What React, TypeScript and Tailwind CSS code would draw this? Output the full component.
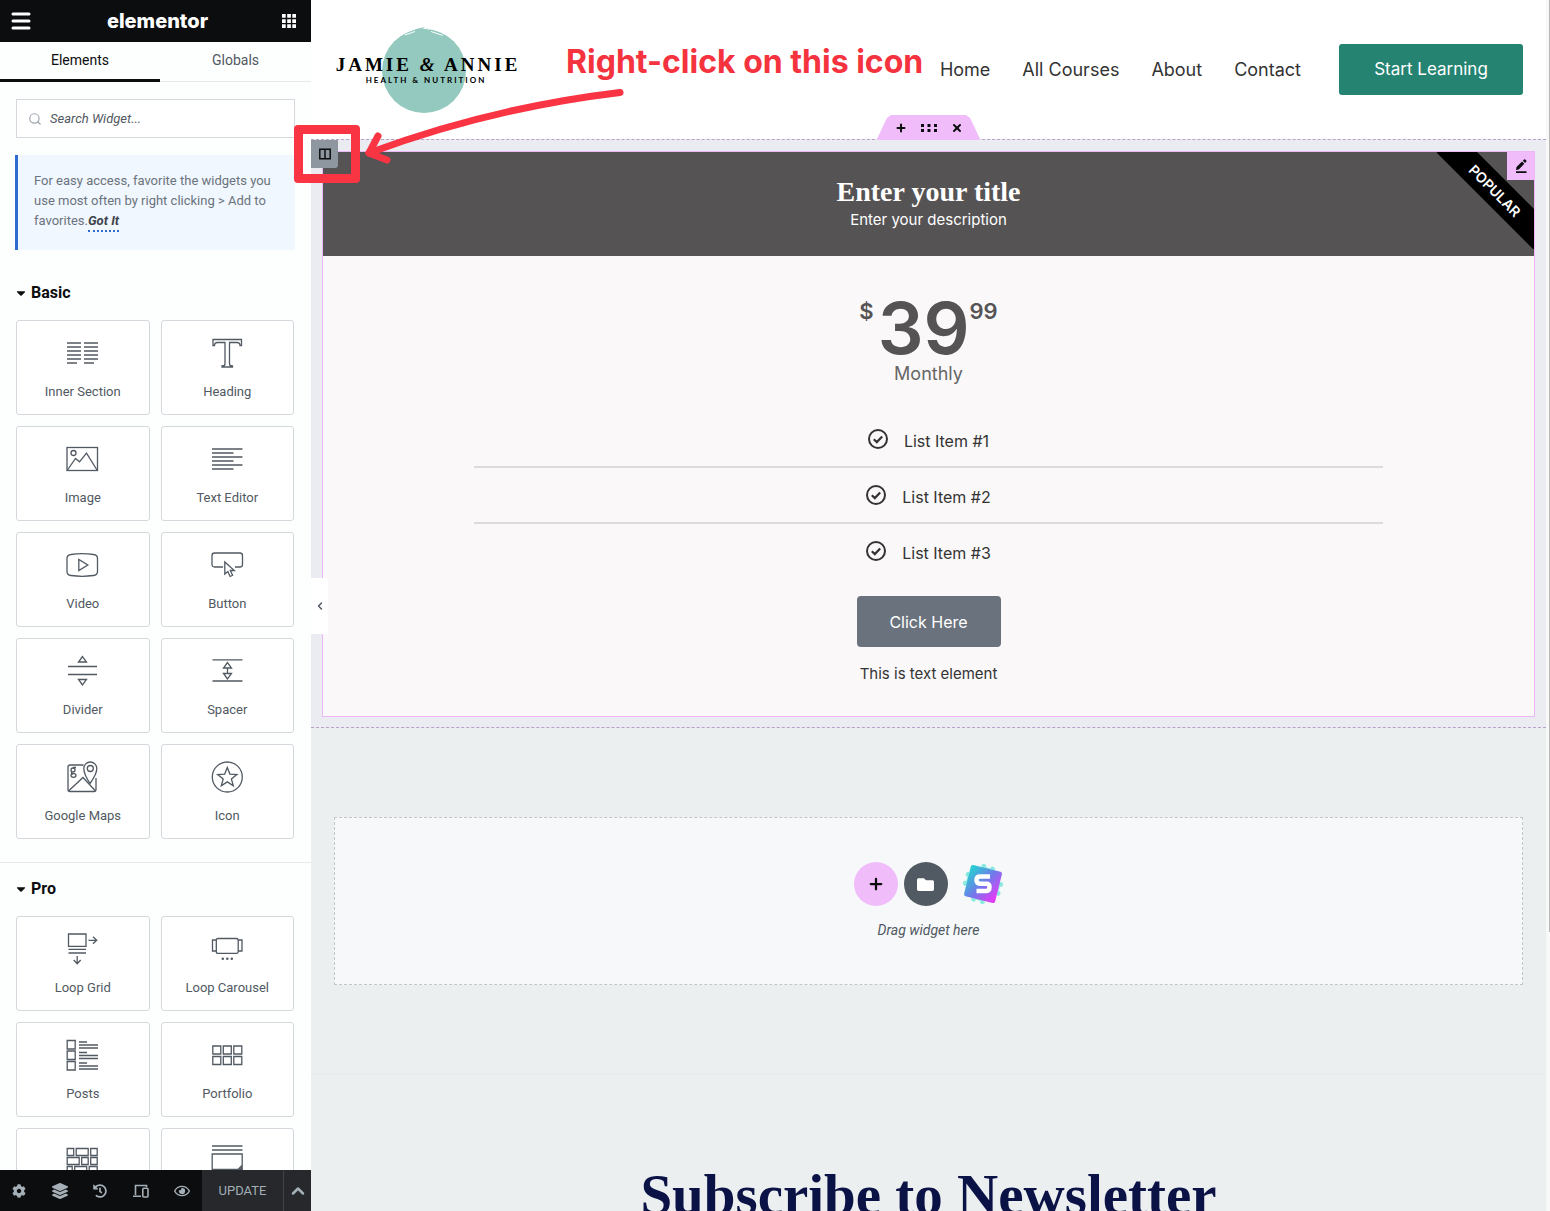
import type { ReactNode } from 'react';
import { FaCog, FaLayerGroup, FaHistory, FaRegEye, FaFolder, FaCaretDown } from 'react-icons/fa';
import { ChevronLeft, ChevronUp, Menu, Plus, Search, X } from 'lucide-react';

interface Widget {
    name?: string;
    icon: ReactNode;
}

const basicWidgets: Widget[] = [
    {
        name: 'Inner Section',
        icon: (
            <path d="M1 6h14M1 10h14M1 14h14M1 18h14M1 22h14M1 26h10M18 6h14M18 10h14M18 14h14M18 18h14M18 22h14M18 26h10" />
        ),
    },
    {
        name: 'Heading',
        icon: (
            <path d="M2 2.5h28.500v6h-1.500q0-3-3-3h-7.500v21.500q0 2 3 2v1h-10.500v-1q3 0 3-2V5.500H6.500q-3 0-3 3H2z" />
        ),
    },
    {
        name: 'Image',
        icon: (
            <>
                <rect x="1" y="4.500" width="30.500" height="23" />
                <circle cx="7.500" cy="10" r="2.500" />
                <path d="M1.500 27 9.500 15.500l4 3.300 7-8.600L31 27" />
            </>
        ),
    },
    {
        name: 'Text Editor',
        icon: <path d="M1 6h30.500M1 10h21.500M1 14h30.500M1 18h21.500M1 22h30.500M1 26h21.500" />,
    },
    {
        name: 'Video',
        icon: (
            <>
                <path d="M5 5.500q11-1.800 22.500 0q4 .5 4 4v13q0 3.500-4 4q-11.500 1.600-22.500 0q-4-.5-4-4v-13q0-3.500 4-4z" />
                <path d="M12.800 10.500v11l9-5.500z" />
            </>
        ),
    },
    {
        name: 'Button',
        icon: (
            <>
                <path d="M12 18H3.500q-2.500 0-2.500-2.500v-9Q1 4 3.500 4H29q2.500 0 2.500 2.500v9Q31.500 18 29 18h-5" />
                <path d="M13.800 13v12l3-2.500 2.300 5 2.500-1.200-2.300-4.800h4z" />
            </>
        ),
    },
    {
        name: 'Divider',
        icon: <path d="M2 11.500h29M2 19.500h29M16.500 1.500l-4 5.500h8zM16.500 30l-4-5.500h8z" />,
    },
    {
        name: 'Spacer',
        icon: <path d="M1.500 4.800h30M1.500 26h30M16.500 7.500l-4 5.500h8zM16.500 24l-4-5.500h8zM16.500 13v5.500" />,
    },
    {
        name: 'Google Maps',
        icon: (
            <>
                <path d="M17.500 4H4Q2 4 2 6v22.500q0 2 2 2h24q2 0 2-2V17" />
                <path d="M24 22.500Q17.800 13 17.800 7.500a6.500 6.500 0 0 1 13 0Q30.800 13 24 22.500z" />
                <circle cx="24.300" cy="7.500" r="3" />
                <path d="M2.500 30 17 16.500l12.500 13.500" />
                <circle cx="7" cy="9" r="2" />
                <path d="M10 6.500H7M6 11q-1.500 1.500 1 2" />
                <ellipse cx="7.500" cy="14.500" rx="2.500" ry="1.800" />
            </>
        ),
    },
    {
        name: 'Icon',
        icon: (
            <>
                <circle cx="16.300" cy="16" r="15" />
                <path d="M16.300 6.500l2.600 6.600 7 .4-5.500 4.400 1.900 6.900-6-3.900-6 3.900 1.900-6.900-5.500-4.400 7-.4z" />
            </>
        ),
    },
];

const proWidgets: Widget[] = [
    {
        name: 'Loop Grid',
        icon: (
            <path d="M2.500 1h17.500v12.300H2.500zM2.500 16.300h17.500M2.500 20h17.500M22.500 7.300h8M27 3.800l3.700 3.500-3.700 3.500M11.200 23v7.500M7.700 27l3.500 3.700 3.500-3.700" />
        ),
    },
    {
        name: 'Loop Carousel',
        icon: (
            <>
                <path d="M7 5.500h18.500q1.700 0 1.700 1.700v11.500q0 1.700-1.700 1.700H7q-1.700 0-1.700-1.700V7.200q0-1.700 1.700-1.700zM5.300 7H1.500v11h3.800M27.200 7H31v11h-3.800" />
                <path strokeWidth="2.500" strokeLinecap="round" d="M11.800 25.700h.01M16.300 25.700h.01M20.800 25.700h.01" />
            </>
        ),
    },
    {
        name: 'Posts',
        icon: (
            <path d="M1.200 1.500h8v8.500h-8zM1.200 12h8v8.500h-8zM1.200 22.500h8V31h-8zM13 3h8M13 6h19M13 9h19M13 13.500h8M13 16.500h19M13 19.500h19M13 24h8M13 27h19M13 30h19" />
        ),
    },
    {
        name: 'Portfolio',
        icon: (
            <path d="M1.800 7h8v8h-8zM12.300 7h8v8h-8zM22.800 7h8v8h-8zM1.800 17.500h8v8h-8zM12.300 17.500h8v8h-8zM22.800 17.500h8v8h-8z" />
        ),
    },
    {
        icon: (
            <path d="M1.200 3.500h6.500v7H1.200zM10.200 3.500h12v7h-12zM24.700 3.500h6.500v7h-6.500zM1.200 12.500h12v7h-12zM15.700 12.500h6.500v7h-6.500zM24.700 12.500h6.500v7h-6.500zM1.200 21.500h5v7h-5zM8.700 21.500h12v7h-12zM23.200 21.500h8v7h-8z" />
        ),
    },
    {
        icon: <path d="M1 1h30.500M1 5h30.500M1.200 9h30v15.500h-30zM31 20.500l-4 4M31 22.500l-2 2" />,
    },
];

const navLinks = ['Home', 'All Courses', 'About', 'Contact'];
const listItems = ['List Item #1', 'List Item #2', 'List Item #3'];

function WidgetGrid({ widgets }: { widgets: Widget[] }) {
    return (
        <div className="grid grid-cols-2 gap-[11px] pr-[17px] pl-4">
            {widgets.map((widget, idx) => (
                <button
                    key={idx}
                    className="flex h-[95px] flex-col items-center rounded-[3px] border border-[#d5d8dc] bg-white pt-4 text-[#515962]"
                >
                    <svg
                        viewBox="0 0 33 32"
                        className="h-8 w-[33px] shrink-0"
                        fill="none"
                        stroke="currentColor"
                        strokeWidth="1.300"
                    >
                        {widget.icon}
                    </svg>
                    {widget.name && <span className="mt-[15px] text-[13px] leading-4">{widget.name}</span>}
                </button>
            ))}
        </div>
    );
}

function CategoryTitle({ title }: { title: string }) {
    return (
        <h2 className="flex items-center gap-1 pl-[15px] text-[16px] leading-5 font-bold text-[#0c0d0e]">
            <FaCaretDown className="h-[14px] w-3" />
            {title}
        </h2>
    );
}

// Panel izquierdo del editor
function Sidebar() {
    return (
        <aside className="flex w-[311px] shrink-0 flex-col bg-[#fdfefe] font-[Roboto,sans-serif]">
            <div className="flex h-[42px] shrink-0 items-center justify-between bg-[#0c0d0e] pr-3 pl-[9px] text-white">
                <button aria-label="Menu">
                    <Menu className="h-6 w-6" strokeWidth={3} />
                </button>
                <span className="font-[Inter,sans-serif] text-[20px] leading-5 font-extrabold">elementor</span>
                <button aria-label="Apps" className="pr-[3px]">
                    <svg viewBox="0 0 14 14" className="h-[14px] w-[14px]" fill="currentColor">
                        <path d="M0 0h3.700v3.700H0zM5.200 0h3.700v3.700H5.200zM10.300 0H14v3.700h-3.700zM0 5.200h3.700v3.700H0zM5.200 5.200h3.700v3.700H5.200zM10.300 5.200H14v3.700h-3.700zM0 10.300h3.700V14H0zM5.200 10.300h3.700V14H5.200zM10.300 10.300H14V14h-3.700z" />
                    </svg>
                </button>
            </div>

            <div className="flex h-10 shrink-0 text-[14px]">
                <button className="w-40 border-b-3 border-[#0c0d0e] text-[#0c0d0e]">Elements</button>
                <button className="flex-1 border-b border-[#e6e9ec] pb-[2px] text-[#515962]">Globals</button>
            </div>

            <div className="min-h-0 flex-1 overflow-hidden">
                <label className="mx-4 mt-[17px] flex h-[39px] items-center gap-2 border border-[#d5d8dc] bg-white px-[11px]">
                    <Search className="h-[14px] w-[14px] text-[#9da5ae]" strokeWidth={2} />
                    <input
                        aria-label="Search Widget"
                        placeholder="Search Widget..."
                        className="min-w-0 flex-1 text-[13px] italic outline-none placeholder:text-[#515962]"
                    />
                </label>

                {/* Aviso de favoritos */}
                <p className="mt-[17px] mr-4 ml-[15px] h-[95px] border-l-3 border-[#2f6bd0] bg-[#f0f7ff] py-4 pr-3 pl-4 text-[13px] leading-5 text-[#6b737c]">
                    For easy access, favorite the widgets you use most often by right clicking &gt; Add to favorites.
                    <a
                        href="#got-it"
                        className="border-b-2 border-dotted border-[#2f6bd0] pb-[2px] font-bold text-[#3f444b] italic"
                    >
                        Got It
                    </a>
                </p>

                <div className="mt-[33px] mb-[17px]">
                    <CategoryTitle title="Basic" />
                </div>
                <WidgetGrid widgets={basicWidgets} />

                <div className="mt-[23px] mb-[17px] border-t border-[#e6e9ec] pt-4">
                    <CategoryTitle title="Pro" />
                </div>
                <WidgetGrid widgets={proWidgets} />
            </div>

            <div className="flex h-[41px] shrink-0 bg-[#0c0d0e] text-[#a4afb7]">
                <div className="flex flex-1 items-center justify-between px-3">
                    <button aria-label="Settings">
                        <FaCog className="h-[14px] w-[14px]" />
                    </button>
                    <button aria-label="Navigator">
                        <FaLayerGroup className="h-4 w-4" />
                    </button>
                    <button aria-label="History">
                        <FaHistory className="h-[14px] w-[14px]" />
                    </button>
                    <button aria-label="Responsive mode">
                        <svg viewBox="0 0 16 14" className="h-[14px] w-4" fill="none" stroke="currentColor" strokeWidth="1.600">
                            <path d="M13.500 3V1.500H2.500V11M0 12.200h8" />
                            <rect x="9.800" y="4.300" width="5.200" height="8.700" rx="1" />
                        </svg>
                    </button>
                    <button aria-label="Preview">
                        <FaRegEye className="h-4 w-4" />
                    </button>
                </div>
                <button className="w-[81px] bg-[#26282b] text-[13px]">UPDATE</button>
                <button
                    aria-label="Save options"
                    className="flex w-7 items-center justify-center border-l border-[#3f444b] bg-[#26282b]"
                >
                    <ChevronUp className="h-5 w-5" strokeWidth={3} />
                </button>
            </div>
        </aside>
    );
}

function Logo() {
    return (
        <a href="#home" className="relative flex h-[86px] w-[184px] flex-col items-center justify-center text-black">
            <svg viewBox="0 0 86 86" className="absolute top-0 left-[47px] h-[86px] w-[86px]" fill="#93c9be">
                <circle cx="43" cy="44" r="42" />
                <path d="M28 5q8-4 16-5l-3 2.500 6-1-4 2zM50 3l10 3.500-12-1z" />
                <path d="M24 8l10-3.500M50 4.500l12 4" stroke="#fff" strokeWidth="1" />
            </svg>
            <span className="relative pl-1 font-['Liberation_Serif',serif] text-[19px] leading-5 font-bold tracking-[3px] whitespace-nowrap">
                JAMIE <i>&amp;</i> ANNIE
            </span>
            <span className="relative font-[Lato,sans-serif] text-[8px] leading-[10px] font-bold tracking-[2px] whitespace-nowrap">
                HEALTH &amp; NUTRITION
            </span>
        </a>
    );
}

function SiteHeader() {
    return (
        <header className="flex h-[139px] items-center justify-between bg-white px-[23px]">
            <Logo />
            <div className="flex items-center gap-[38px]">
                <nav className="flex gap-8 text-[18px] text-[#333]">
                    {navLinks.map((link) => (
                        <a key={link} href="#nav">
                            {link}
                        </a>
                    ))}
                </nav>
                <button className="h-[51px] w-[184px] rounded-[3px] bg-[#258371] text-[17px] text-white">
                    Start Learning
                </button>
            </div>
        </header>
    );
}

function SectionToolbar() {
    return (
        <div className="absolute -top-[25px] left-1/2 flex h-[25px] w-[104px] -translate-x-1/2 items-center justify-center gap-[14px] bg-[#f0bcfa] text-[#0c0d0e] [clip-path:polygon(0_100%,10%_12%,14%_0,86%_0,90%_12%,100%_100%)]">
            <button aria-label="Add section">
                <Plus className="h-3 w-3" strokeWidth={4} />
            </button>
            <button aria-label="Edit section">
                <svg viewBox="0 0 16 8" className="h-2 w-4" fill="currentColor">
                    <path d="M0 0h3v3H0zM6.500 0h3v3h-3zM13 0h3v3h-3zM0 5h3v3H0zM6.500 5h3v3h-3zM13 5h3v3h-3z" />
                </svg>
            </button>
            <button aria-label="Delete section">
                <X className="h-3 w-3" strokeWidth={4} />
            </button>
        </div>
    );
}

function PriceTable() {
    return (
        <div className="relative flex h-[566px] flex-col items-center border border-[#efb6f9] bg-[#faf8f9]">
            <div className="flex h-[104px] w-full flex-col items-center bg-[#555354] pt-6 text-white">
                <h3 className="font-['Liberation_Serif',serif] text-[28px] leading-8 font-bold">Enter your title</h3>
                <p className="text-[15px] leading-6">Enter your description</p>
            </div>

            <div className="mt-[38px] flex items-start font-semibold text-[#555354]">
                <span className="mt-[5px] mr-1 text-[22px] leading-6">$</span>
                <span className="text-[72px] leading-[68px]">39</span>
                <span className="mt-[5px] text-[22px] leading-6">99</span>
            </div>
            <span className="text-[18px] leading-6 text-[#666]">Monthly</span>

            <ul className="mt-[26px] w-3/4 text-[16px] text-[#333]">
                {listItems.map((item) => (
                    <li
                        key={item}
                        className="flex h-14 items-center justify-center gap-4 border-b-2 border-[#dddbdd] pt-1 last:h-[54px] last:border-b-0"
                    >
                        <svg viewBox="0 0 20 20" className="mb-1 h-5 w-5" fill="none" stroke="currentColor" strokeWidth="2">
                            <circle cx="10" cy="10" r="9" />
                            <path strokeWidth="2.200" d="M5.800 10.300l3 2.800 5.400-5.600" />
                        </svg>
                        {item}
                    </li>
                ))}
            </ul>

            <button className="mt-[18px] h-[51px] w-36 rounded bg-[#69727d] text-[16px] text-white">Click Here</button>
            <p className="mt-[17px] text-[15px] leading-5 text-[#333]">This is text element</p>

            {/* Cinta de la esquina */}
            <div className="absolute top-0 right-0 h-[97px] w-[97px] overflow-hidden">
                <div className="absolute top-6 -right-9 w-[150px] rotate-45 bg-black text-center text-[14px] leading-[29px] font-semibold text-white">
                    POPULAR
                </div>
            </div>
            <button
                aria-label="Edit widget"
                className="absolute top-0 right-0 flex h-7 w-[27px] items-center justify-center bg-[#f0bcfa] text-[#0c0d0e]"
            >
                <svg viewBox="0 0 12 14" className="h-[14px] w-3" fill="currentColor">
                    <path d="M1 11l.5-3L7 2.500 9.300 4.800 3.800 10.500zM7.800 1.700 9 .6q.6-.5 1.200 0l1 1q.5.6 0 1.200L10.100 4zM1 12.300h10.500V14H1z" />
                </svg>
            </button>
        </div>
    );
}

function DropZone() {
    return (
        <div className="mx-[23px] mt-[89px] flex h-[168px] flex-col items-center justify-center border border-dashed border-[#c2c5c9] bg-[#f6f8fa]">
            <div className="flex items-center gap-[6px]">
                <button
                    aria-label="Add new section"
                    className="flex h-11 w-11 items-center justify-center rounded-full bg-[#f0bcfa] text-[#0c0d0e]"
                >
                    <Plus className="h-[18px] w-[18px]" strokeWidth={3} />
                </button>
                <button
                    aria-label="Add template"
                    className="flex h-11 w-11 items-center justify-center rounded-full bg-[#515962] text-white"
                >
                    <FaFolder className="h-[17px] w-[17px]" />
                </button>
                <button aria-label="Starter templates" className="ml-2 h-[42px] w-[42px]">
                    <svg viewBox="0 0 42 42" className="h-full w-full">
                        <defs>
                            <linearGradient id="starter" x1="0" y1="0.200" x2="1" y2="0.800">
                                <stop offset="0" stopColor="#2bcbd3" />
                                <stop offset="0.500" stopColor="#6f7bea" />
                                <stop offset="1" stopColor="#e23cf7" />
                            </linearGradient>
                        </defs>
                        <circle cx="21" cy="21" r="17" fill="#8aeadf" />
                        <circle
                            cx="21"
                            cy="21"
                            r="18"
                            fill="none"
                            stroke="#8aeadf"
                            strokeWidth="4"
                            strokeLinecap="round"
                            strokeDasharray="1 8.400"
                        />
                        <rect x="5" y="5" width="32" height="32" rx="2" fill="url(#starter)" transform="rotate(14 21 21)" />
                        <path
                            d="M28 13.500H18q-3.500 0-3.500 3.500t3.500 3.800h6.500q3 0 3 3.500t-3 3.700h-10"
                            fill="none"
                            stroke="#fff"
                            strokeWidth="4.500"
                        />
                    </svg>
                </button>
            </div>
            <p className="mt-[14px] font-[Roboto,sans-serif] text-[14px] leading-5 text-[#515962] italic">Drag widget here</p>
        </div>
    );
}

// Flecha y recuadro que señalan el icono de columna
function Annotation() {
    return (
        <>
            <p className="absolute top-[42px] left-[566px] text-[32px] leading-10 font-bold whitespace-nowrap text-[#f5333f]">
                Right-click on this icon
            </p>
            <div className="absolute top-[125px] left-[294px] h-[58px] w-[66px] rounded-[4px] border-9 border-[#f93543]" />
            <svg
                viewBox="0 0 270 90"
                className="absolute top-[80px] left-[360px] h-[90px] w-[270px]"
                fill="none"
                stroke="#f93543"
                strokeWidth="7"
                strokeLinecap="round"
                strokeLinejoin="round"
            >
                <path d="M260 12.500Q130 28 9 73" />
                <path d="M18 56 9 73l18 7" />
            </svg>
        </>
    );
}

export default function App() {
    return (
        <div className="relative flex h-screen overflow-hidden bg-white font-[Inter,sans-serif]">
            <Sidebar />

            <main className="min-w-0 flex-1 overflow-hidden bg-[#eceff0]">
                <SiteHeader />
                <section className="relative border-y border-dashed border-[#b9a0c9] bg-[#ebebf2] px-[11px] pt-[11px] pb-[10px]">
                    <SectionToolbar />
                    <PriceTable />
                    <button
                        aria-label="Edit column"
                        className="absolute top-0 left-0 flex h-7 w-[27px] items-center justify-center rounded-br-[3px] bg-[#8e979f] text-[#0c0d0e]"
                    >
                        <svg viewBox="0 0 12 12" className="h-3 w-3" fill="none" stroke="currentColor" strokeWidth="1.500">
                            <path d="M.8 1.200h10.400v9.600H.8zM6 1v10" />
                        </svg>
                    </button>
                </section>

                <DropZone />

                <section className="mt-[89px] border-t border-[#e8ebed] pt-[84px]">
                    <h1 className="text-center font-['Liberation_Serif',serif] text-[57px] leading-[72px] font-bold whitespace-nowrap text-[#0b1245]">
                        Subscribe to Newsletter
                    </h1>
                </section>
            </main>

            <div className="w-1 shrink-0 bg-[#f8f8f8] pl-[3px]">
                <div className="h-[77%] bg-[#b9b9b9]" />
            </div>

            <button
                aria-label="Collapse panel"
                className="absolute top-[578px] left-[311px] flex h-14 w-[17px] items-center justify-center rounded-r-[3px] bg-white text-[#515962]"
            >
                <ChevronLeft className="h-3 w-3" strokeWidth={3} />
            </button>
            <Annotation />
        </div>
    );
}
